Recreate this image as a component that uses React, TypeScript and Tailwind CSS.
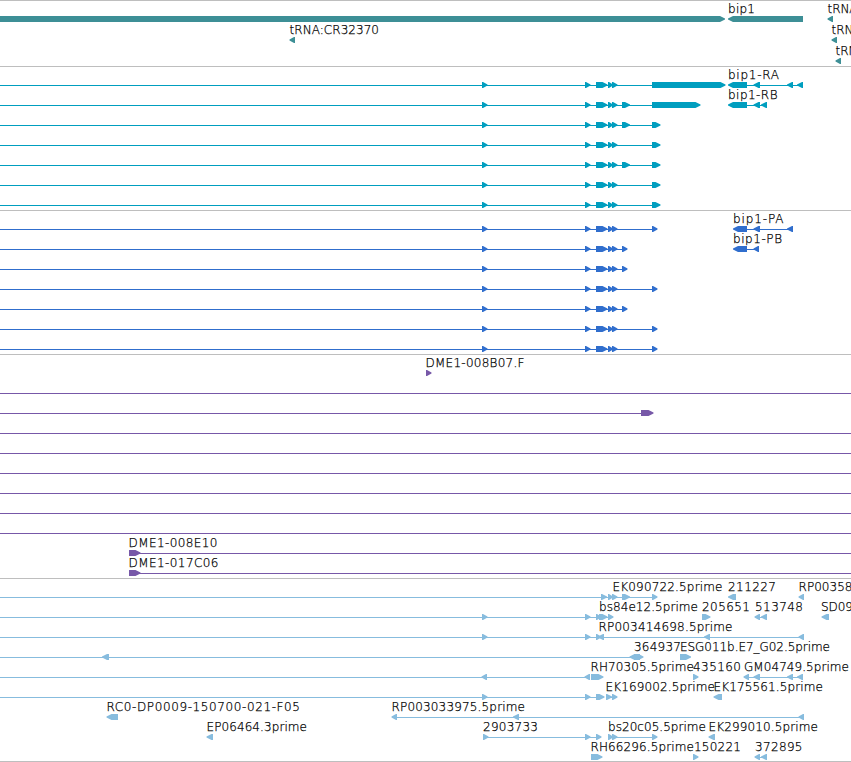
type Span = [number, number];
type Label = [x: number, text: string, width: number];

interface Row {
  lines?: Span[];
  // arrows pointing right / left, as start and end positions
  right?: Span[];
  left?: Span[];
  labels?: Label[];
}

interface TrackData {
  name: string;
  box: string;
  height: number;
  pitch: number;
  rows: Row[];
}

const WIDTH = 851;
const FIRST_ROW = 15;

const exons: Span[] = [
  [482, 487.5],
  [585, 590.5],
  [596, 607.5],
  [608, 613],
  [612, 617.5],
];

const transcript = (...tail: Span[]): Row => ({
  lines: [[0, tail[tail.length - 1][1] - 2]],
  right: [...exons, ...tail],
});

const fullLine: Row = { lines: [[0, WIDTH]] };

const genes: Row[] = [
  {
    right: [[-10, 725]],
    left: [[728, 803], [827.5, 833]],
    labels: [[728, 'bip1', 27], [827.5, 'tRNA', 30]],
  },
  {
    left: [[289.5, 295], [831.5, 837]],
    labels: [[289.5, 'tRNA:CR32370', 89.5], [831.5, 'tRNA', 30]],
  },
  { left: [[835.5, 841]], labels: [[835.5, 'tRNA', 30]] },
];

const transcripts: Row[] = [
  {
    lines: [[0, 655], [740, 801]],
    right: [...exons, [652, 725.5]],
    left: [[728, 747], [753.5, 760], [787, 793], [797, 803]],
    labels: [[728, 'bip1-RA', 51]],
  },
  {
    lines: [[0, 655], [740, 765]],
    right: [...exons, [622, 630], [652, 700.5]],
    left: [[728, 747], [753.5, 760], [761, 767]],
    labels: [[728, 'bip1-RB', 49.5]],
  },
  transcript([622, 630], [652, 660.5]),
  transcript([652, 660.5]),
  transcript([622, 630], [652, 660.5]),
  transcript([652, 660.5]),
  transcript([652, 660.5]),
];

const proteins: Row[] = [
  {
    lines: [[0, 655], [740, 791]],
    right: [...exons, [652, 657.5]],
    left: [[733, 747], [753.5, 760], [787, 793]],
    labels: [[733, 'bip1-PA', 50.5]],
  },
  {
    lines: [[0, 625], [740, 757]],
    right: [...exons, [622, 627.5]],
    left: [[733, 747], [753.5, 759]],
    labels: [[733, 'bip1-PB', 49]],
  },
  transcript([622, 627.5]),
  transcript([652, 657.5]),
  transcript([622, 627.5]),
  transcript([652, 657.5]),
  transcript([652, 657.5]),
];

const clones: Row[] = [
  { right: [[426, 431.5]], labels: [[425.5, 'DME1-008B07.F', 99]] },
  fullLine,
  { lines: [[0, 645]], right: [[641, 653.5]] },
  fullLine,
  fullLine,
  fullLine,
  fullLine,
  fullLine,
  fullLine,
  { lines: [[135, WIDTH]], right: [[129, 140.5]], labels: [[128.5, 'DME1-008E10', 89]] },
  { lines: [[135, WIDTH]], right: [[129, 140.5]], labels: [[128.5, 'DME1-017C06', 90]] },
];

const ests: Row[] = [
  {
    lines: [[0, 655]],
    right: [[601, 607], [608, 613], [612, 617.5], [622, 630], [652, 657.5]],
    left: [[728, 736], [798.5, 804]],
    labels: [[612.5, 'EK090722.5prime', 110], [728, '211227', 48], [798.5, 'RP00358', 54]],
  },
  {
    lines: [[0, 610], [757, 765]],
    right: [[482, 487.5], [585, 590.5], [596, 601], [599, 607.5], [608, 613.5], [702, 710.5]],
    left: [[754.5, 760], [761, 767], [821.5, 829]],
    labels: [
      [599, 'bs84e12.5prime', 99],
      [702, '205651', 48],
      [755, '513748', 48],
      [821, 'SD09', 32],
    ],
  },
  {
    lines: [[0, 802]],
    right: [[482, 487.5], [585, 590.5], [596, 601]],
    left: [[598, 604], [704, 710], [798.5, 804]],
    labels: [[598.5, 'RP003414698.5prime', 134]],
  },
  {
    lines: [[0, 633]],
    right: [[634, 643.5], [680, 691]],
    left: [[102, 109], [629.5, 640]],
    labels: [[634, '364937', 47], [680, 'ESG011b.E7_G02.5prime', 150]],
  },
  {
    lines: [[0, 588], [746, 801]],
    right: [[591, 603.5], [693, 698.5]],
    left: [[481.5, 487], [584.5, 590], [743.5, 749], [753.5, 760], [787, 793], [797, 803]],
    labels: [[590.5, 'RH70305.5prime', 103.5], [693, '435160', 48], [744, 'GM04749.5prime', 105]],
  },
  {
    lines: [[0, 600], [608, 614]],
    right: [[482, 487.5], [585, 590.5], [596, 604.5], [606, 612], [612, 617.5]],
    left: [[713.5, 722]],
    labels: [[605.5, 'EK169002.5prime', 109.5], [713.5, 'EK175561.5prime', 109.5]],
  },
  {
    lines: [[394, 802]],
    left: [[106.5, 118], [391.5, 397], [513, 519], [798.5, 804]],
    labels: [[106.5, 'RC0-DP0009-150700-021-F05', 193.5], [391.5, 'RP003033975.5prime', 133.5]],
  },
  {
    lines: [[485, 599], [610, 655]],
    right: [[483, 488.5], [585, 590.5], [596, 601.5], [608, 613], [612, 617.5], [652, 657.5]],
    left: [[206.5, 213], [708.5, 715]],
    labels: [
      [206.5, 'EP06464.3prime', 100.5],
      [483, '2903733', 55],
      [608, 'bs20c05.5prime', 98],
      [708.5, 'EK299010.5prime', 109.5],
    ],
  },
  {
    lines: [[757, 765]],
    right: [[591, 602.5], [693, 698.5]],
    left: [[754.5, 760], [761, 767]],
    labels: [[590.5, 'RH66296.5prime', 103.5], [694, '150221', 47], [755, '372895', 47.5]],
  },
];

const tracks: TrackData[] = [
  { name: 'Genes', box: 'h-[66px] text-[#3d8f96]', height: 65, pitch: 21, rows: genes },
  { name: 'Transcripts', box: 'h-36 text-[#009ebf]', height: 143, pitch: 20, rows: transcripts },
  { name: 'Proteins', box: 'h-36 text-[#306ecd]', height: 143, pitch: 20, rows: proteins },
  { name: 'Clones', box: 'h-56 text-[#7758a8]', height: 223, pitch: 20, rows: clones },
  { name: 'ESTs', box: 'h-[183px] text-[#87bcde]', height: 182, pitch: 20, rows: ests },
];

function arrowPoints(from: number, to: number, y: number, dir: 1 | -1) {
  const head = Math.min(5, to - from - 1);
  if (dir === 1) {
    const neck = to - head;
    return `${from},${y} ${neck},${y} ${to},${y + 2.5} ${to},${y + 3.5} ${neck},${y + 6} ${from},${y + 6}`;
  }
  const neck = from + head;
  return `${to},${y} ${neck},${y} ${from},${y + 2.5} ${from},${y + 3.5} ${neck},${y + 6} ${to},${y + 6}`;
}

function FeatureRow({ row, y }: { row: Row; y: number }) {
  return (
    <g>
      {row.lines?.map(([from, to]) => (
        <rect key={from} x={from} y={y + 3} width={to - from} height={1} />
      ))}
      {row.right?.map(([from, to]) => (
        <polygon key={from} points={arrowPoints(from, to, y, 1)} />
      ))}
      {row.left?.map(([from, to]) => (
        <polygon key={from} points={arrowPoints(from, to, y, -1)} />
      ))}
      {row.labels?.map(([x, text, width]) => (
        <text key={x} x={x} y={y - 3} textLength={width} strokeWidth={0.25} className="fill-black stroke-black">
          {text}
        </text>
      ))}
    </g>
  );
}

function Track({ track }: { track: TrackData }) {
  return (
    <section aria-label={track.name} className={`border-t border-[#bebebe] ${track.box}`}>
      <svg width={WIDTH} height={track.height} className="block fill-current">
        {track.rows.map((row, i) => (
          <FeatureRow key={i} row={row} y={FIRST_ROW + i * track.pitch} />
        ))}
      </svg>
    </section>
  );
}

export default function App() {
  return (
    <main className="flex h-[762px] w-[851px] flex-col overflow-hidden border-b border-[#bebebe] bg-white font-['DejaVu_Sans',sans-serif] text-[12px] font-extralight">
      {tracks.map((track) => (
        <Track key={track.name} track={track} />
      ))}
    </main>
  );
}
